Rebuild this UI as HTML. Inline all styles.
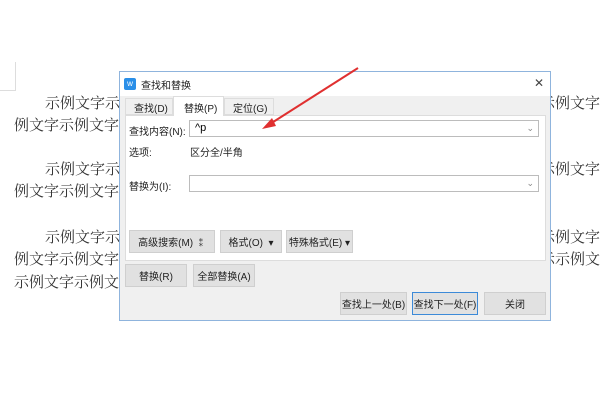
<!DOCTYPE html>
<html><head><meta charset="utf-8"><style>
body{margin:0;width:600px;height:408px;background:#fff;position:relative;overflow:hidden;font-family:"Liberation Sans","Noto Sans CJK SC",sans-serif;}
.d{position:absolute;font-family:"Liberation Serif","Noto Serif CJK SC",serif;font-size:15px;color:#333;white-space:nowrap;}
.a{position:absolute;}
.t{font-size:10px;color:#222;position:absolute;white-space:nowrap;}
.btn{position:absolute;background:#e1e1e1;border:1px solid #cfcfcf;font-size:10px;color:#222;display:flex;align-items:center;justify-content:center;box-sizing:border-box;}
.in{position:absolute;background:#fff;border:1px solid #bcbcbc;box-sizing:border-box;height:17px;font-size:11px;}
.chev{position:absolute;right:4px;top:2px;color:#888;font-size:9px;}
</style></head><body>
<div class="a" style="left:0;top:62px;width:15px;height:28px;border-right:1px solid #ddd;border-bottom:1px solid #ddd"></div>
<div class="d" style="left:45px;top:92px">示例文字示</div>
<div class="d" style="left:14px;top:114px">例文字示例文字</div>
<div class="d" style="left:45px;top:158px">示例文字示</div>
<div class="d" style="left:14px;top:180px">例文字示例文字</div>
<div class="d" style="left:45px;top:226px">示例文字示</div>
<div class="d" style="left:14px;top:248px">例文字示例文字</div>
<div class="d" style="left:14px;top:271px">示例文字示例文</div>
<div class="d" style="left:540px;top:92px">示例文字</div>
<div class="d" style="left:540px;top:158px">示例文字</div>
<div class="d" style="left:540px;top:226px">示例文字</div>
<div class="d" style="left:540px;top:248px">示示例文</div>

<div class="a" style="left:119px;top:71px;width:432px;height:250px;background:#f0f0f0;border:1px solid #8fb4dd;box-sizing:border-box">
 <div class="a" style="left:0;top:0;width:430px;height:24px;background:#fff"></div>
 <div class="a" style="left:4px;top:6px;width:12px;height:12px;background:#2a8fe8;border-radius:2px;color:#fff;font-size:8px;text-align:center;line-height:12px">w</div>
 <div class="t" style="left:21px;top:5px">查找和替换</div>
 <div class="t" style="left:414px;top:4px;font-size:12px;color:#444">✕</div>
 <div class="a" style="left:5px;top:43px;width:421px;height:146px;background:#fff;border:1px solid #ddd;box-sizing:border-box"></div>
 <div class="a" style="left:5px;top:26px;width:48px;height:17px;background:#f0f0f0;border:1px solid #ddd;box-sizing:border-box"></div>
 <div class="t" style="left:14px;top:28px">查找(D)</div>
 <div class="a" style="left:53px;top:24px;width:51px;height:20px;background:#fff;border:1px solid #ddd;border-bottom:none;box-sizing:border-box"></div>
 <div class="t" style="left:64px;top:28px">替换(P)</div>
 <div class="a" style="left:104px;top:26px;width:50px;height:17px;background:#f0f0f0;border:1px solid #ddd;box-sizing:border-box"></div>
 <div class="t" style="left:113px;top:28px">定位(G)</div>
 <div class="t" style="left:9px;top:51px">查找内容(N):</div>
 <div class="in" style="left:69px;top:48px;width:350px"><span style="position:absolute;left:5px;top:1px">^p</span><span class="chev">⌄</span></div>
 <div class="t" style="left:9px;top:72px">选项:</div>
 <div class="t" style="left:70px;top:72px">区分全/半角</div>
 <div class="t" style="left:9px;top:106px">替换为(I):</div>
 <div class="in" style="left:69px;top:103px;width:350px"><span class="chev">⌄</span></div>
 <div class="btn" style="left:9px;top:158px;width:86px;height:23px">高级搜索(M) ⁑</div>
 <div class="btn" style="left:100px;top:158px;width:62px;height:23px">格式(O) &nbsp;▾</div>
 <div class="btn" style="left:166px;top:158px;width:67px;height:23px">特殊格式(E) ▾</div>
 <div class="btn" style="left:5px;top:192px;width:62px;height:23px">替换(R)</div>
 <div class="btn" style="left:73px;top:192px;width:62px;height:23px">全部替换(A)</div>
 <div class="btn" style="left:220px;top:220px;width:67px;height:23px">查找上一处(B)</div>
 <div class="btn" style="left:292px;top:220px;width:66px;height:23px;border:1px solid #3c8ad8">查找下一处(F)</div>
 <div class="btn" style="left:364px;top:220px;width:62px;height:23px">关闭</div>
</div>
<svg class="a" style="left:0;top:0" width="600" height="408"><line x1="358" y1="68" x2="270" y2="124" stroke="#e03030" stroke-width="2"/><polygon points="262,129 272,118 276,126" fill="#e03030"/></svg>
</body></html>
